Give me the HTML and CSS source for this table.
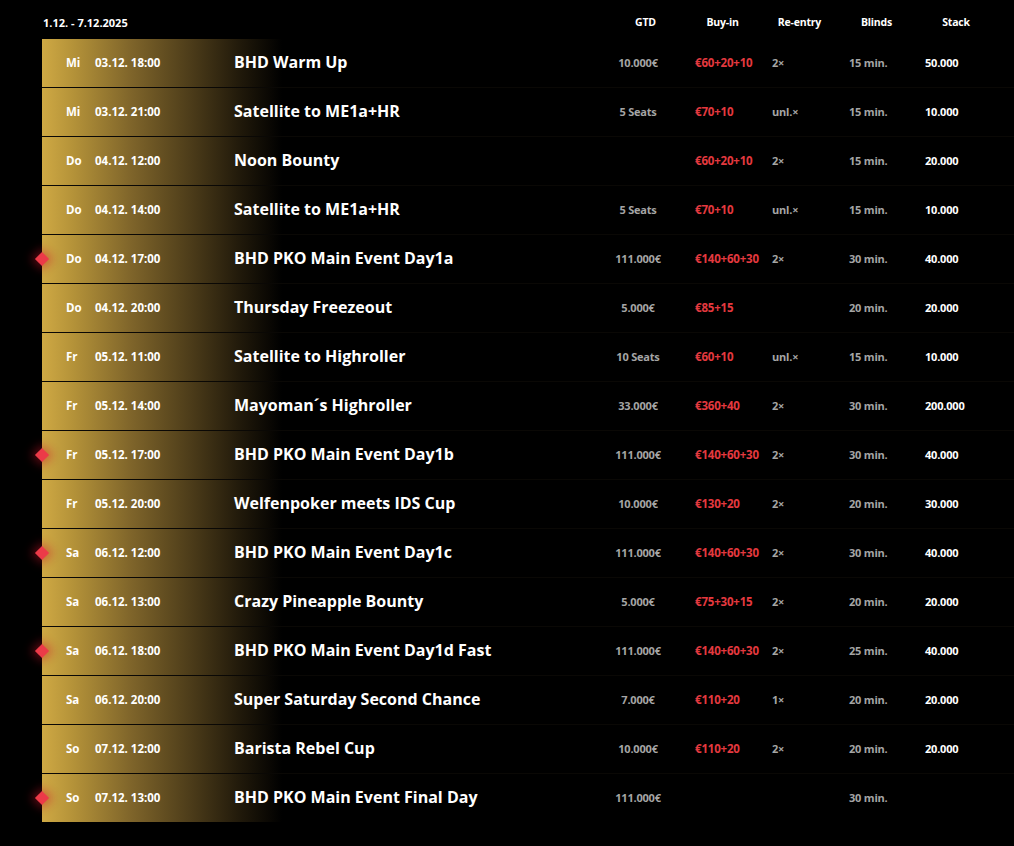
FILE: index.html
```html
<!DOCTYPE html>
<html lang="de">
<head>
<meta charset="utf-8">
<title>Turnierplan 1.12. - 7.12.2025</title>
<link rel="stylesheet" href="styles.css">
</head>
<body>
<div class="schedule">
  <div class="head">
    <div class="range">1.12. - 7.12.2025</div>
    <div class="hcell">GTD</div>
    <div class="hcell">Buy-in</div>
    <div class="hcell">Re-entry</div>
    <div class="hcell">Blinds</div>
    <div class="hcell">Stack</div>
  </div>
  <div class="rows">
    <div class="row"><span class="day">Mi</span><span class="date">03.12. 18:00</span><span class="title">BHD Warm Up</span><span class="gtd">10.000€</span><span class="buyin">€60+20+10</span><span class="re">2×</span><span class="blinds">15 min.</span><span class="stack">50.000</span></div>
    <div class="row"><span class="day">Mi</span><span class="date">03.12. 21:00</span><span class="title">Satellite to ME1a+HR</span><span class="gtd">5 Seats</span><span class="buyin">€70+10</span><span class="re">unl.×</span><span class="blinds">15 min.</span><span class="stack">10.000</span></div>
    <div class="row"><span class="day">Do</span><span class="date">04.12. 12:00</span><span class="title">Noon Bounty</span><span class="gtd"></span><span class="buyin">€60+20+10</span><span class="re">2×</span><span class="blinds">15 min.</span><span class="stack">20.000</span></div>
    <div class="row"><span class="day">Do</span><span class="date">04.12. 14:00</span><span class="title">Satellite to ME1a+HR</span><span class="gtd">5 Seats</span><span class="buyin">€70+10</span><span class="re">unl.×</span><span class="blinds">15 min.</span><span class="stack">10.000</span></div>
    <div class="row main"><span class="day">Do</span><span class="date">04.12. 17:00</span><span class="title">BHD PKO Main Event Day1a</span><span class="gtd">111.000€</span><span class="buyin">€140+60+30</span><span class="re">2×</span><span class="blinds">30 min.</span><span class="stack">40.000</span></div>
    <div class="row"><span class="day">Do</span><span class="date">04.12. 20:00</span><span class="title">Thursday Freezeout</span><span class="gtd">5.000€</span><span class="buyin">€85+15</span><span class="re"></span><span class="blinds">20 min.</span><span class="stack">20.000</span></div>
    <div class="row"><span class="day">Fr</span><span class="date">05.12. 11:00</span><span class="title">Satellite to Highroller</span><span class="gtd">10 Seats</span><span class="buyin">€60+10</span><span class="re">unl.×</span><span class="blinds">15 min.</span><span class="stack">10.000</span></div>
    <div class="row"><span class="day">Fr</span><span class="date">05.12. 14:00</span><span class="title">Mayoman´s Highroller</span><span class="gtd">33.000€</span><span class="buyin">€360+40</span><span class="re">2×</span><span class="blinds">30 min.</span><span class="stack">200.000</span></div>
    <div class="row main"><span class="day">Fr</span><span class="date">05.12. 17:00</span><span class="title">BHD PKO Main Event Day1b</span><span class="gtd">111.000€</span><span class="buyin">€140+60+30</span><span class="re">2×</span><span class="blinds">30 min.</span><span class="stack">40.000</span></div>
    <div class="row"><span class="day">Fr</span><span class="date">05.12. 20:00</span><span class="title">Welfenpoker meets IDS Cup</span><span class="gtd">10.000€</span><span class="buyin">€130+20</span><span class="re">2×</span><span class="blinds">20 min.</span><span class="stack">30.000</span></div>
    <div class="row main"><span class="day">Sa</span><span class="date">06.12. 12:00</span><span class="title">BHD PKO Main Event Day1c</span><span class="gtd">111.000€</span><span class="buyin">€140+60+30</span><span class="re">2×</span><span class="blinds">30 min.</span><span class="stack">40.000</span></div>
    <div class="row"><span class="day">Sa</span><span class="date">06.12. 13:00</span><span class="title">Crazy Pineapple Bounty</span><span class="gtd">5.000€</span><span class="buyin">€75+30+15</span><span class="re">2×</span><span class="blinds">20 min.</span><span class="stack">20.000</span></div>
    <div class="row main"><span class="day">Sa</span><span class="date">06.12. 18:00</span><span class="title">BHD PKO Main Event Day1d Fast</span><span class="gtd">111.000€</span><span class="buyin">€140+60+30</span><span class="re">2×</span><span class="blinds">25 min.</span><span class="stack">40.000</span></div>
    <div class="row"><span class="day">Sa</span><span class="date">06.12. 20:00</span><span class="title">Super Saturday Second Chance</span><span class="gtd">7.000€</span><span class="buyin">€110+20</span><span class="re">1×</span><span class="blinds">20 min.</span><span class="stack">20.000</span></div>
    <div class="row"><span class="day">So</span><span class="date">07.12. 12:00</span><span class="title">Barista Rebel Cup</span><span class="gtd">10.000€</span><span class="buyin">€110+20</span><span class="re">2×</span><span class="blinds">20 min.</span><span class="stack">20.000</span></div>
    <div class="row main last"><span class="day">So</span><span class="date">07.12. 13:00</span><span class="title">BHD PKO Main Event Final Day</span><span class="gtd">111.000€</span><span class="buyin"></span><span class="re"></span><span class="blinds">30 min.</span><span class="stack"></span></div>
  </div>
</div>
</body>
</html>
```
FILE: styles.css
```css
html, body {
  margin: 0;
  padding: 0;
  background: #000;
  color: #fff;
  font-family: "Open Sans", "Liberation Sans", sans-serif;
  font-weight: 700;
}

.schedule {
  padding-left: 42px;
  width: 972px;
}

.head {
  display: grid;
  grid-template-columns: 565px 77px 77px 77px 77px 82px;
  height: 39px;
  align-items: center;
  font-size: 10.5px;
  letter-spacing: -0.2px;
  box-sizing: border-box;
  padding-top: 5px;
}

.range {
  padding-left: 1px;
  font-size: 11px;
  letter-spacing: 0;
}

.hcell {
  text-align: center;
}

.row {
  position: relative;
  display: grid;
  grid-template-columns: 29px 139px 366px 95px 77px 77px 76px 1fr;
  align-items: center;
  height: 49px;
  box-sizing: border-box;
  padding-left: 24px;
  padding-bottom: 2px;
  border-bottom: 1px solid #0a0805;
  background: linear-gradient(90deg, #cfa944 0px, #b59339 30px, #7e642a 90px, #4b3b19 150px, #1f180a 200px, #000 240px);
  font-size: 11px;
  letter-spacing: -0.2px;
}

.row.last {
  border-bottom: none;
  height: 48px;
}

.row.main::before {
  content: "";
  position: absolute;
  left: -5px;
  top: 50%;
  width: 10px;
  height: 10px;
  margin-top: -5px;
  background: #ec3a48;
  transform: rotate(45deg);
  box-shadow: 0 0 10px 3px rgba(200, 20, 40, 0.45);
}

.day, .date {
  color: #fff;
  font-size: 11.5px;
  letter-spacing: 0;
}

.title {
  font-size: 16px;
  color: #fff;
  letter-spacing: 0;
}

.gtd {
  color: #a5a5a5;
  text-align: center;
  padding-right: 19px;
}

.buyin {
  color: #e4393f;
  font-size: 11.5px;
}

.re, .blinds {
  color: #a5a5a5;
}

.stack {
  color: #fff;
}
```
